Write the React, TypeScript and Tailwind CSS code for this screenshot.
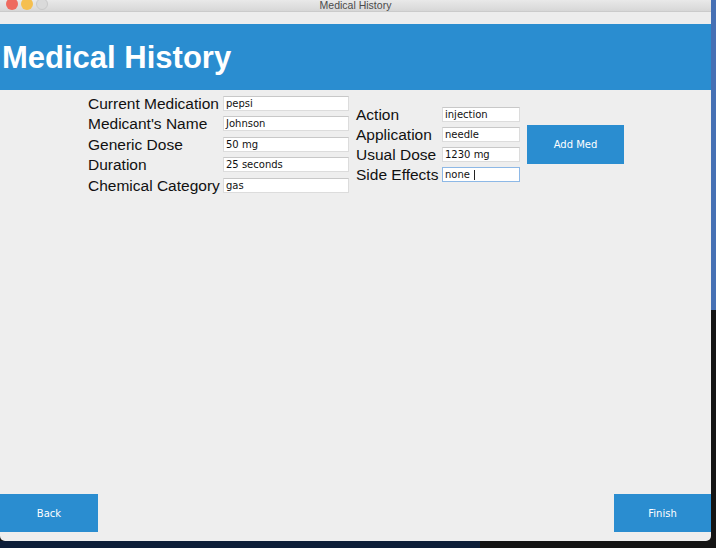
import React from 'react';

const leftFields = [
  { label: 'Current Medication', value: 'pepsi' },
  { label: "Medicant's Name", value: 'Johnson' },
  { label: 'Generic Dose', value: '50 mg' },
  { label: 'Duration', value: '25 seconds' },
  { label: 'Chemical Category', value: 'gas' },
];

const rightFields = [
  { label: 'Action', value: 'injection' },
  { label: 'Application', value: 'needle' },
  { label: 'Usual Dose', value: '1230 mg' },
  { label: 'Side Effects', value: 'none', focused: true },
];

const labelFont = { fontFamily: '"Liberation Sans", Arial, sans-serif' };
const fieldFont = { fontFamily: '"DejaVu Sans", sans-serif' };

function Field({ value, focused }: { value: string; focused?: boolean }) {
  return (
    <div
      className={
        'flex h-[15px] w-full items-center bg-white pl-[2px] pt-[1px] text-[10px] leading-none text-[#111] ' +
        (focused ? 'border border-[#8db8e6]' : 'border border-[#dcdcdc] border-t-[#c8c8c8]')
      }
      style={fieldFont}
    >
      <span>{value}</span>
      {focused && <span className="ml-[4px] h-[10px] w-px bg-[#222]" />}
    </div>
  );
}

function BlueButton({ children, className }: { children: React.ReactNode; className: string }) {
  return (
    <div
      className={'flex items-center justify-center bg-[#2a8dd0] text-[10px] text-white ' + className}
      style={fieldFont}
    >
      {children}
    </div>
  );
}

export default function App() {
  return (
    <div className="flex h-[548px] w-[716px] overflow-hidden bg-[#141414]">
      <div className="flex w-[711px] flex-col">
        {/* window */}
        <div className="flex h-[541px] flex-col overflow-hidden rounded-b-[5px] bg-[#eeeeee]">
          {/* title bar */}
          <div className="relative flex h-[12px] items-start overflow-hidden border-b border-[#cbcbcb] bg-gradient-to-b from-[#e9e9e9] to-[#d7d7d7]">
            <div className="-mt-[2px] flex gap-[3px] pl-[6px]">
              <span className="h-[12px] w-[12px] rounded-full bg-[#ee6a5f]" />
              <span className="h-[12px] w-[12px] rounded-full bg-[#f5bf4f]" />
              <span className="h-[12px] w-[12px] rounded-full border border-[#c9c9c9] bg-[#dadada]" />
            </div>
            <div
              className="absolute inset-x-0 -top-[2px] text-center text-[10.5px] text-[#4b4b4b]"
              style={labelFont}
            >
              Medical History
            </div>
          </div>
          <div className="h-[12px] bg-[#ededed]" />

          {/* header */}
          <div className="flex h-[66px] items-center bg-[#2a8dd0] pl-[2px]">
            <h1 className="text-[31px] font-bold leading-none text-white" style={labelFont}>
              Medical History
            </h1>
          </div>

          {/* form */}
          <div className="flex items-center pl-[88px] pt-[3px]">
            <div className="grid w-[261px] grid-cols-[135px_126px]">
              {leftFields.map((f) => (
                <React.Fragment key={f.label}>
                  <div className="flex h-[20.5px] items-center text-[15.5px] text-[#111]" style={labelFont}>
                    {f.label}
                  </div>
                  <div className="flex h-[20.5px] items-center">
                    <Field value={f.value} />
                  </div>
                </React.Fragment>
              ))}
            </div>
            <div className="ml-[7px] grid grid-cols-[86px_78px]">
              {rightFields.map((f) => (
                <React.Fragment key={f.label}>
                  <div className="flex h-[20px] items-center text-[15.5px] text-[#111]" style={labelFont}>
                    {f.label}
                  </div>
                  <div className="flex h-[20px] items-center">
                    <Field value={f.value} focused={f.focused} />
                  </div>
                </React.Fragment>
              ))}
            </div>
            <BlueButton className="ml-[7px] h-[39px] w-[97px]">Add Med</BlueButton>
          </div>

          <div className="flex-1" />

          {/* footer */}
          <div className="flex justify-between pb-[9px]">
            <BlueButton className="h-[38px] w-[98px]">Back</BlueButton>
            <BlueButton className="h-[38px] w-[97px]">Finish</BlueButton>
          </div>
        </div>
        <div className="flex flex-1">
          <div className="w-[480px] bg-[#0d1d38]" />
        </div>
      </div>
      <div className="flex w-[5px] flex-col">
        <div className="h-[310px] bg-[#4670b4]" />
      </div>
    </div>
  );
}
